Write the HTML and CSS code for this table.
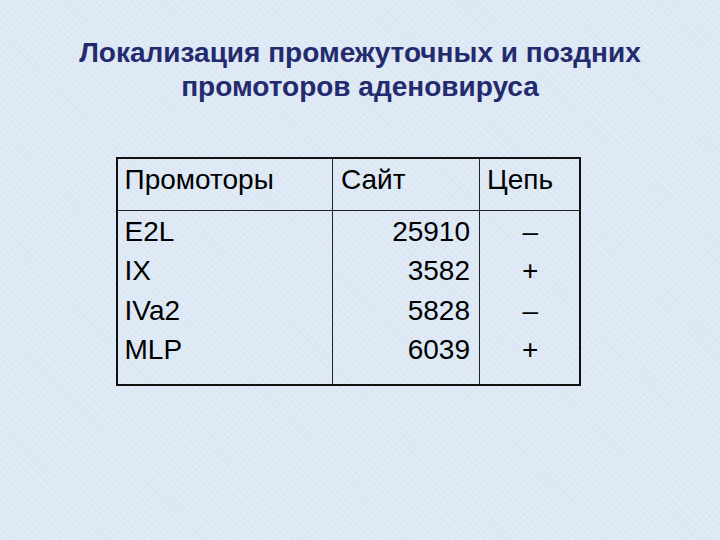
FILE: index.html
```html
<!DOCTYPE html>
<html>
<head>
<meta charset="utf-8">
<link rel="stylesheet" href="styles.css">
</head>
<body>
<div class="slide">
  <h1 class="title">Локализация промежуточных и поздних<br>промоторов аденовируса</h1>
  <table class="tbl">
    <tr class="head">
      <td class="c1">Промоторы</td>
      <td class="c2">Сайт</td>
      <td class="c3">Цепь</td>
    </tr>
    <tr class="body">
      <td class="c1">E2L<br>IX<br>IVa2<br>MLP</td>
      <td class="c2 num">25910<br>3582<br>5828<br>6039</td>
      <td class="c3 sign">–<br>+<br>–<br>+</td>
    </tr>
  </table>
</div>
</body>
</html>
```
FILE: styles.css
```css
html, body {
  margin: 0;
  padding: 0;
}
body {
  width: 720px;
  height: 540px;
  background-color: #dde8f5;
  background-image:
    repeating-linear-gradient(45deg, rgba(255,255,255,0.14) 0 2px, rgba(255,255,255,0) 2px 5px),
    repeating-linear-gradient(-45deg, rgba(180,200,225,0.10) 0 1px, rgba(255,255,255,0) 1px 4px);
  font-family: "Liberation Sans", Arial, sans-serif;
  overflow: hidden;
}
.slide {
  display: flex;
  flex-direction: column;
  align-items: center;
  padding-top: 36px;
}
.title {
  margin: 0;
  font-size: 28px;
  line-height: 34px;
  font-weight: bold;
  color: #232a6e;
  text-align: center;
}
.tbl {
  margin-top: 53px;
  margin-left: -24px;
  border-collapse: collapse;
  border: 2px solid #111;
  font-size: 28px;
  color: #000;
}
.tbl td {
  border: 1px solid #222;
  vertical-align: top;
  padding: 0;
}
.head td {
  height: 52px;
  line-height: 32px;
  padding-top: 5px;
  box-sizing: border-box;
}
.body td {
  height: 175px;
  line-height: 39.5px;
  padding-top: 1px;
  box-sizing: border-box;
}
.c1 {
  width: 216px;
  padding-left: 7px !important;
}
.c2 {
  width: 147px;
}
.head .c2 {
  padding-left: 8px !important;
}
.num {
  text-align: right;
  padding-right: 9px !important;
}
.c3 {
  width: 100px;
}
.head .c3 {
  padding-left: 7px !important;
}
.sign {
  text-align: center;
  padding-left: 2px !important;
}
```
